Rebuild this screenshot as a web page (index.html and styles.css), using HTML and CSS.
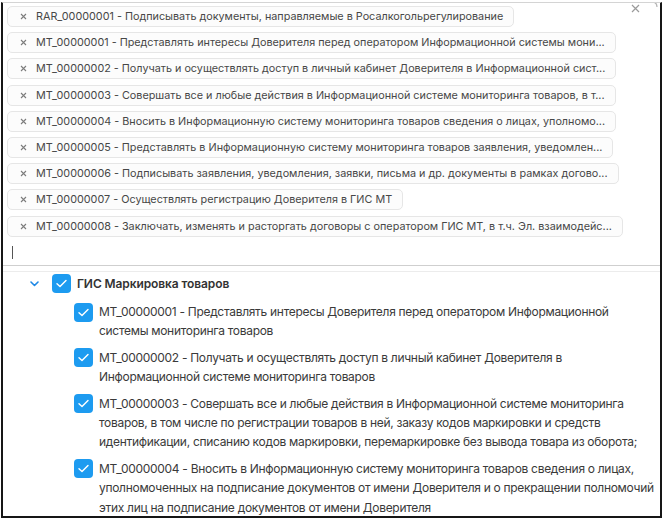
FILE: index.html
```html
<!DOCTYPE html>
<html lang="ru">
<head>
<meta charset="utf-8">
<title>Полномочия</title>
<link rel="stylesheet" href="styles.css">
</head>
<body>
<div class="frame">
  <div class="select">
    <div class="chips">
      <div class="chip"><svg class="chip-x" width="7" height="7" viewBox="0 0 7 7"><path d="M1 1L6 6M6 1L1 6" stroke="#7d7d7d" stroke-width="1.1" fill="none"/></svg><span class="chip-text">RAR_00000001 - Подписывать документы, направляемые в Росалкогольрегулирование</span></div>
      <div class="chip"><svg class="chip-x" width="7" height="7" viewBox="0 0 7 7"><path d="M1 1L6 6M6 1L1 6" stroke="#7d7d7d" stroke-width="1.1" fill="none"/></svg><span class="chip-text">MT_00000001 - Представлять интересы Доверителя перед оператором Информационной системы мони...</span></div>
      <div class="chip"><svg class="chip-x" width="7" height="7" viewBox="0 0 7 7"><path d="M1 1L6 6M6 1L1 6" stroke="#7d7d7d" stroke-width="1.1" fill="none"/></svg><span class="chip-text">MT_00000002 - Получать и осуществлять доступ в личный кабинет Доверителя в Информационной сист...</span></div>
      <div class="chip"><svg class="chip-x" width="7" height="7" viewBox="0 0 7 7"><path d="M1 1L6 6M6 1L1 6" stroke="#7d7d7d" stroke-width="1.1" fill="none"/></svg><span class="chip-text">MT_00000003 - Совершать все и любые действия в Информационной системе мониторинга товаров, в т...</span></div>
      <div class="chip"><svg class="chip-x" width="7" height="7" viewBox="0 0 7 7"><path d="M1 1L6 6M6 1L1 6" stroke="#7d7d7d" stroke-width="1.1" fill="none"/></svg><span class="chip-text">MT_00000004 - Вносить в Информационную систему мониторинга товаров сведения о лицах, уполномо...</span></div>
      <div class="chip"><svg class="chip-x" width="7" height="7" viewBox="0 0 7 7"><path d="M1 1L6 6M6 1L1 6" stroke="#7d7d7d" stroke-width="1.1" fill="none"/></svg><span class="chip-text">MT_00000005 - Представлять в Информационную систему мониторинга товаров заявления, уведомлен...</span></div>
      <div class="chip"><svg class="chip-x" width="7" height="7" viewBox="0 0 7 7"><path d="M1 1L6 6M6 1L1 6" stroke="#7d7d7d" stroke-width="1.1" fill="none"/></svg><span class="chip-text">MT_00000006 - Подписывать заявления, уведомления, заявки, письма и др. документы в рамках догово...</span></div>
      <div class="chip"><svg class="chip-x" width="7" height="7" viewBox="0 0 7 7"><path d="M1 1L6 6M6 1L1 6" stroke="#7d7d7d" stroke-width="1.1" fill="none"/></svg><span class="chip-text">MT_00000007 - Осуществлять регистрацию Доверителя в ГИС МТ</span></div>
      <div class="chip"><svg class="chip-x" width="7" height="7" viewBox="0 0 7 7"><path d="M1 1L6 6M6 1L1 6" stroke="#7d7d7d" stroke-width="1.1" fill="none"/></svg><span class="chip-text">MT_00000008 - Заключать, изменять и расторгать договоры с оператором ГИС МТ, в т.ч. Эл. взаимодейс...</span></div>
    </div>
    <div class="cursor-line"><span class="caret"></span></div>
    <svg class="clear" width="9" height="9" viewBox="0 0 9 9"><path d="M1 1L8 8M8 1L1 8" stroke="#9a9a9a" stroke-width="1.2" fill="none"/></svg>
    <svg class="arrow" width="8" height="12" viewBox="0 0 8 12"><path d="M1 1C4 1 6 3 6 6" stroke="#b5b5b5" stroke-width="1.2" fill="none"/></svg>
  </div>

  <div class="tree">
    <div class="group-row">
      <svg class="chevron" width="9" height="6" viewBox="0 0 9 6"><path d="M1 1L4.5 4.5L8 1" stroke="#1e88e5" stroke-width="1.6" fill="none" stroke-linecap="round" stroke-linejoin="round"/></svg>
      <svg class="box" width="19" height="19" viewBox="0 0 19 19"><rect x="0" y="0" width="19" height="19" rx="4" fill="#1d9bf0"/><path d="M5 9.8L8 12.6L14 6.4" stroke="#fff" stroke-width="1.4" fill="none" stroke-linecap="round" stroke-linejoin="round"/></svg>
      <span class="group-label">ГИС Маркировка товаров</span>
    </div>
    <ul class="items">
      <li class="item">
        <svg class="box" width="19" height="19" viewBox="0 0 19 19"><rect x="0" y="0" width="19" height="19" rx="4" fill="#1d9bf0"/><path d="M5 9.8L8 12.6L14 6.4" stroke="#fff" stroke-width="1.4" fill="none" stroke-linecap="round" stroke-linejoin="round"/></svg>
        <span class="item-text">MT_00000001 - Представлять интересы Доверителя перед оператором Информационной<br>системы мониторинга товаров</span>
      </li>
      <li class="item">
        <svg class="box" width="19" height="19" viewBox="0 0 19 19"><rect x="0" y="0" width="19" height="19" rx="4" fill="#1d9bf0"/><path d="M5 9.8L8 12.6L14 6.4" stroke="#fff" stroke-width="1.4" fill="none" stroke-linecap="round" stroke-linejoin="round"/></svg>
        <span class="item-text">MT_00000002 - Получать и осуществлять доступ в личный кабинет Доверителя в<br>Информационной системе мониторинга товаров</span>
      </li>
      <li class="item">
        <svg class="box" width="19" height="19" viewBox="0 0 19 19"><rect x="0" y="0" width="19" height="19" rx="4" fill="#1d9bf0"/><path d="M5 9.8L8 12.6L14 6.4" stroke="#fff" stroke-width="1.4" fill="none" stroke-linecap="round" stroke-linejoin="round"/></svg>
        <span class="item-text">MT_00000003 - Совершать все и любые действия в Информационной системе мониторинга<br>товаров, в том числе по регистрации товаров в ней, заказу кодов маркировки и средств<br>идентификации, списанию кодов маркировки, перемаркировке без вывода товара из оборота;</span>
      </li>
      <li class="item">
        <svg class="box" width="19" height="19" viewBox="0 0 19 19"><rect x="0" y="0" width="19" height="19" rx="4" fill="#1d9bf0"/><path d="M5 9.8L8 12.6L14 6.4" stroke="#fff" stroke-width="1.4" fill="none" stroke-linecap="round" stroke-linejoin="round"/></svg>
        <span class="item-text">MT_00000004 - Вносить в Информационную систему мониторинга товаров сведения о лицах,<br>уполномоченных на подписание документов от имени Доверителя и о прекращении полномочий<br>этих лиц на подписание документов от имени Доверителя</span>
      </li>
    </ul>
  </div>
</div>
</body>
</html>
```

FILE: styles.css
```css
* { box-sizing: border-box; }

html, body {
  margin: 0;
  padding: 0;
  background: #fff;
}

body {
  padding: 2px 0 0 1px;
  font-family: Inter, "Noto Sans", sans-serif;
  color: #383838;
}

.frame {
  width: 661px;
  height: 516px;
  border-left: 2px solid #161616;
  border-right: 2px solid #161616;
  border-bottom: 2px solid #161616;
  border-top: 1px solid #d4d4d4;
  overflow: hidden;
}

/* multi-select field */
.select {
  position: relative;
  height: 263px;
  padding: 3px 0 0 4px;
  border-bottom: 1px solid #cfcfcf;
}

.chips {
  display: flex;
  flex-direction: column;
  align-items: flex-start;
  gap: 5.2px;
}

.chip {
  display: flex;
  align-items: center;
  height: 21px;
  padding: 0 10px 0 12px;
  border: 1px solid #e6e6e6;
  border-radius: 5px;
  background: #fcfcfc;
  font-size: 10.8px;
  color: #474747;
  white-space: nowrap;
}

.chip-x {
  flex: none;
  margin-right: 9px;
}

.cursor-line {
  padding: 9px 0 0 5px;
}

.caret {
  display: block;
  width: 1px;
  height: 13px;
  background: #555;
}

.clear {
  position: absolute;
  top: 1px;
  right: 20px;
}

.arrow {
  position: absolute;
  top: -2px;
  right: 1px;
}

/* dropdown tree */
.tree {
  margin-top: 5px;
  border-top: 1px solid #ececec;
  padding: 2px 0 0 25px;
}

.group-row {
  display: flex;
  align-items: center;
  height: 19px;
}

.chevron {
  margin: 0 0 0 2px;
}

.group-row .box {
  margin-left: 13px;
}

.group-label {
  margin-left: 6px;
  font-size: 12px;
  letter-spacing: -0.1px;
  font-weight: 600;
  color: #333;
}

.items {
  list-style: none;
  margin: 9px 0 0 0;
  padding: 0 0 0 46px;
  display: flex;
  flex-direction: column;
  gap: 7px;
}

.item {
  display: flex;
  align-items: flex-start;
}

.item .box {
  flex: none;
  margin-top: 0.5px;
}

.item-text {
  margin-left: 6px;
  font-size: 12px;
  letter-spacing: -0.3px;
  line-height: 19.4px;
  color: #3a3a3a;
  white-space: nowrap;
}
```
